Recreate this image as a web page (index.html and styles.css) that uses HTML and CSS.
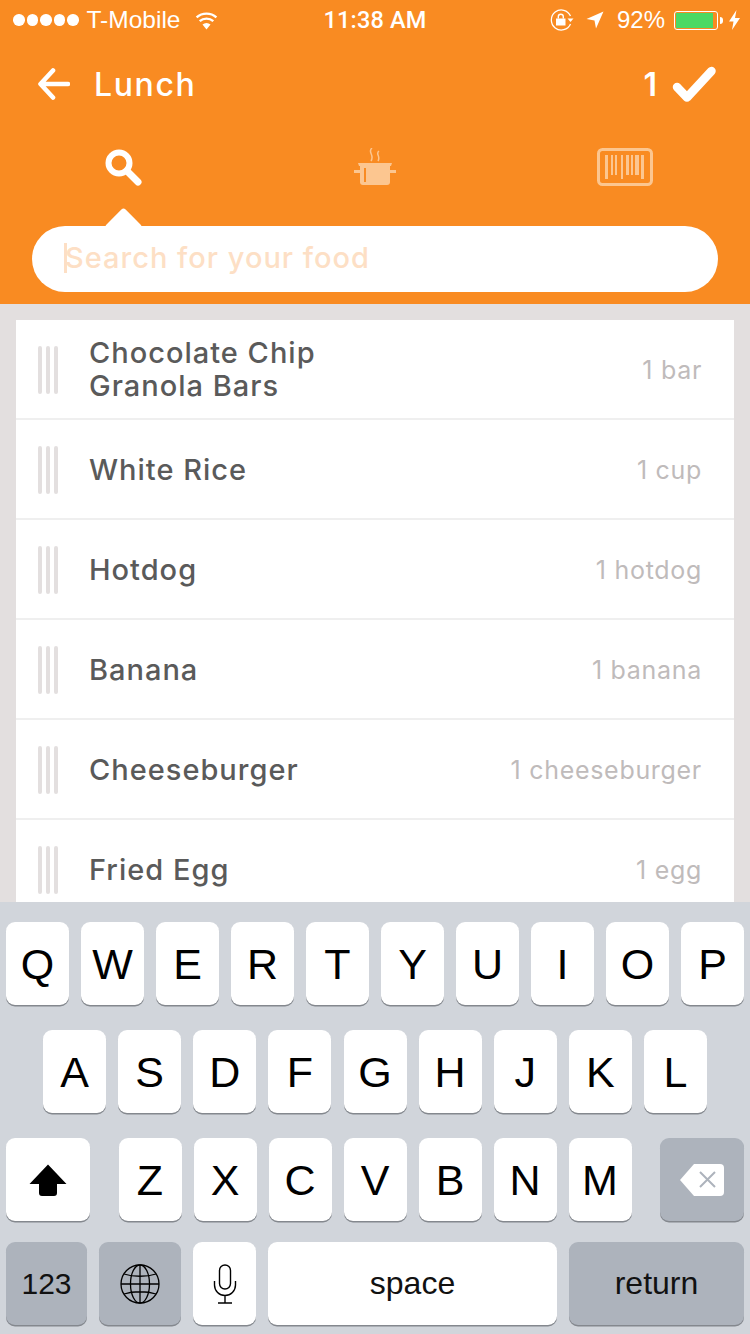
FILE: index.html
```html
<!DOCTYPE html>
<html lang="en">
<head>
    <meta charset="UTF-8">
    <title>Lunch</title>
    <link rel="stylesheet" href="styles.css">
</head>
<body>
<div class="screen">
    <header class="top">
        <div class="status">
            <div class="status-left">
                <span class="dots"><i></i><i></i><i></i><i></i><i></i></span>
                <span class="carrier">T-Mobile</span>
                <svg class="wifi" width="25" height="19" viewBox="0 0 25 19">
                    <path d="M12.5 18.5l-4-5a6 6 0 0 1 8 0z" fill="#fff"/>
                    <path d="M5.7 10.2a10.2 10.2 0 0 1 13.6 0M2.6 6.4a15 15 0 0 1 19.8 0" fill="none" stroke="#fff" stroke-width="2.4"/>
                </svg>
            </div>
            <div class="time">11:38 AM</div>
            <div class="status-right">
                <svg width="24" height="22" viewBox="0 0 24 22">
                    <path d="M20.500 15a10 10 0 1 1 0-8" fill="none" stroke="#fff" stroke-width="1.300"/>
                    <path d="M17.500 9.500h6l-3 3.500z" fill="#fff"/>
                    <path d="M6 9.500h9.500v7h-9.500z" fill="#fff"/>
                    <path d="M8.300 9.500v-1.800a2.500 2.500 0 0 1 5 0v1.800" fill="none" stroke="#fff" stroke-width="1.400"/>
                </svg>
                <svg class="arrow-loc" width="18" height="18" viewBox="0 0 18 18">
                    <path d="M17.500 0.500L0.500 8l8 1.500 1.500 8z" fill="#fff"/>
                </svg>
                <span class="batt-pct">92%</span>
                <span class="battery"><span class="battery-fill"></span></span>
                <span class="battery-tip"></span>
                <svg class="bolt" width="11" height="20" viewBox="0 0 11 20">
                    <path d="M7.500 0L0 11.500h4.500L3 20l8-12H6z" fill="#fff"/>
                </svg>
            </div>
        </div>

        <div class="nav">
            <svg width="32" height="32" viewBox="0 0 32 32">
                <path d="M15 2.500L2.500 16 15 29.500M3 16h27" fill="none" stroke="#fff" stroke-width="4.600" stroke-linecap="round" stroke-linejoin="round"/>
            </svg>
            <span class="nav-title">Lunch</span>
            <span class="nav-count">1</span>
            <svg width="44" height="37" viewBox="0 0 44 37">
                <path d="M5 21l10 10.500L39.500 5" fill="none" stroke="#fff" stroke-width="8.500" stroke-linecap="round" stroke-linejoin="round"/>
            </svg>
        </div>

        <div class="tabs">
            <div class="tab tab-search">
                <svg width="38" height="38" viewBox="0 0 38 38">
                    <circle cx="15" cy="15" r="10.500" fill="none" stroke="#fff" stroke-width="6"/>
                    <path d="M23 23l11 11" stroke="#fff" stroke-width="7" stroke-linecap="round"/>
                </svg>
            </div>
            <div class="tab">
                <svg width="42" height="38" viewBox="0 0 42 38">
                    <g fill="#fcc690">
                        <path d="M4 15h34l-1 3h-32z"/>
                        <path d="M6 17h30v17a3 3 0 0 1-3 3h-24a3 3 0 0 1-3-3z"/>
                        <path d="M0 22h6v3h-6zM36 22h6v3h-6z"/>
                    </g>
                    <path d="M11 20v14" stroke="#f98b22" stroke-width="2"/>
                    <path d="M18 0c-5 4 3 7-1 13M25 3c-4 3 2 5-1 10" fill="none" stroke="#fcc690" stroke-width="1.500"/>
                </svg>
            </div>
            <div class="tab">
                <svg width="56" height="38" viewBox="0 0 56 38">
                    <rect x="1.500" y="1.500" width="53" height="35" rx="4" fill="none" stroke="#fcc690" stroke-width="3"/>
                    <g fill="#fcc690">
                        <rect x="8" y="7" width="3" height="24"/>
                        <rect x="14" y="7" width="2" height="20"/>
                        <rect x="18" y="7" width="2" height="20"/>
                        <rect x="24" y="7" width="2" height="24"/>
                        <rect x="29" y="7" width="3" height="20"/>
                        <rect x="34" y="7" width="2" height="20"/>
                        <rect x="38" y="7" width="4" height="20"/>
                        <rect x="44" y="7" width="3" height="24"/>
                    </g>
                </svg>
            </div>
        </div>

        <div class="search">
            <span class="search-tip"></span>
            <span class="search-caret"></span>
            <span class="search-text">Search for your food</span>
        </div>
    </header>

    <main class="content">
        <ul class="food-list">
            <li class="food">
                <span class="grip"><i></i><i></i><i></i></span>
                <span class="food-name">Chocolate Chip<br>Granola Bars</span>
                <span class="food-qty">1 bar</span>
            </li>
            <li class="food">
                <span class="grip"><i></i><i></i><i></i></span>
                <span class="food-name">White Rice</span>
                <span class="food-qty">1 cup</span>
            </li>
            <li class="food">
                <span class="grip"><i></i><i></i><i></i></span>
                <span class="food-name">Hotdog</span>
                <span class="food-qty">1 hotdog</span>
            </li>
            <li class="food">
                <span class="grip"><i></i><i></i><i></i></span>
                <span class="food-name">Banana</span>
                <span class="food-qty">1 banana</span>
            </li>
            <li class="food">
                <span class="grip"><i></i><i></i><i></i></span>
                <span class="food-name">Cheeseburger</span>
                <span class="food-qty">1 cheeseburger</span>
            </li>
            <li class="food">
                <span class="grip"><i></i><i></i><i></i></span>
                <span class="food-name">Fried Egg</span>
                <span class="food-qty">1 egg</span>
            </li>
        </ul>
    </main>

    <div class="keyboard">
        <div class="kb-row">
            <div class="key">Q</div><div class="key">W</div><div class="key">E</div><div class="key">R</div><div class="key">T</div><div class="key">Y</div><div class="key">U</div><div class="key">I</div><div class="key">O</div><div class="key">P</div>
        </div>
        <div class="kb-row kb-row-2">
            <div class="key">A</div><div class="key">S</div><div class="key">D</div><div class="key">F</div><div class="key">G</div><div class="key">H</div><div class="key">J</div><div class="key">K</div><div class="key">L</div>
        </div>
        <div class="kb-row">
            <div class="key key-shift">
                <svg width="38" height="32" viewBox="0 0 38 32">
                    <path d="M19 0.500L37.500 20H28v9a3 3 0 0 1-3 3H13a3 3 0 0 1-3-3v-9H0.500z" fill="#000"/>
                </svg>
            </div>
            <div class="kb-group">
                <div class="key">Z</div><div class="key">X</div><div class="key">C</div><div class="key">V</div><div class="key">B</div><div class="key">N</div><div class="key">M</div>
            </div>
            <div class="key key-dark key-delete">
                <svg width="44" height="32" viewBox="0 0 44 32">
                    <path d="M14 0h26a4 4 0 0 1 4 4v24a4 4 0 0 1-4 4H14L0 16z" fill="#fff"/>
                    <path d="M20 8l15 15M35 8L20 23" stroke="#adb3bc" stroke-width="2"/>
                </svg>
            </div>
        </div>
        <div class="kb-row kb-row-4">
            <div class="key key-dark key-num">123</div>
            <div class="key key-dark key-globe">
                <svg width="40" height="40" viewBox="0 0 40 40">
                    <g fill="none" stroke="#000" stroke-width="1.300">
                        <circle cx="20" cy="20" r="19"/>
                        <ellipse cx="20" cy="20" rx="9.500" ry="19"/>
                        <path d="M20 1v38M1 20h38M4 10c9 3 23 3 32 0M4 30c9-3 23-3 32 0"/>
                    </g>
                </svg>
            </div>
            <div class="key">
                <svg width="24" height="40" viewBox="0 0 24 40">
                    <rect x="6.500" y="1" width="11" height="24" rx="5.500" fill="none" stroke="#000" stroke-width="1.400"/>
                    <path d="M1.500 17v4a10.500 10.500 0 0 0 21 0v-4M12 31.500V39M5 39h14" fill="none" stroke="#000" stroke-width="1.400"/>
                </svg>
            </div>
            <div class="key key-space">space</div>
            <div class="key key-dark key-return">return</div>
        </div>
    </div>
</div>
</body>
</html>
```

FILE: styles.css
```css
html, body {
    margin: 0;
    padding: 0;
}
body {
    font-family: Inter, 'Noto Sans', sans-serif;
    background: #e3dfdf;
}
.screen {
    width: 750px;
    height: 1334px;
    display: flex;
    flex-direction: column;
    overflow: hidden;
}

/* orange header */
.top {
    height: 304px;
    flex: none;
    background: #f98b22;
    color: #fff;
}
.status {
    height: 40px;
    display: grid;
    grid-template-columns: 1fr auto 1fr;
    align-items: center;
    font-family: 'Liberation Sans', Arial, sans-serif;
    font-size: 24px;
}
.status-left {
    display: flex;
    align-items: center;
    padding-left: 13px;
}
.dots {
    display: flex;
    gap: 2px;
}
.dots i {
    width: 11.500px;
    height: 11.500px;
    border-radius: 50%;
    background: #fff;
}
.carrier {
    margin-left: 8px;
    font-size: 24.500px;
}
.wifi {
    margin-left: 14px;
}
.time {
    font-family: Roboto, sans-serif;
    font-weight: 500;
    font-size: 23.500px;
    letter-spacing: 0.200px;
}
.status-right {
    display: flex;
    align-items: center;
    justify-content: flex-end;
    padding-right: 10px;
}
.arrow-loc {
    margin-left: 12px;
}
.batt-pct {
    margin-left: 13px;
}
.battery {
    margin-left: 9px;
    width: 44px;
    height: 19px;
    box-sizing: border-box;
    border: 1px solid #fff;
    border-radius: 3px;
    padding: 1px;
    background: #f98b22;
}
.battery-fill {
    display: block;
    height: 100%;
    width: 92%;
    background: #4cd964;
}
.battery-tip {
    width: 3px;
    height: 7px;
    margin-left: 2px;
    background: #fff;
    border-radius: 0 3px 3px 0;
}
.bolt {
    margin-left: 6px;
}

.nav {
    height: 88px;
    display: flex;
    align-items: center;
    padding: 0 34px 0 38px;
}
.nav-title {
    margin-left: 24px;
    font-size: 32px;
    font-weight: 500;
    letter-spacing: 1.600px;
}
.nav-count {
    margin-left: auto;
    margin-right: 15px;
    font-size: 32px;
    font-weight: 600;
}

.tabs {
    display: flex;
    height: 40px;
    margin-top: 19px;
    align-items: center;
}
.tab {
    width: 250px;
    box-sizing: border-box;
    display: flex;
    justify-content: center;
}
.tab-search {
    padding-right: 4px;
}

.search {
    position: relative;
    height: 66px;
    margin: 39px 32px 0;
    background: #fff;
    border-radius: 33px;
    display: flex;
    align-items: center;
    padding-left: 33px;
}
.search-tip {
    position: absolute;
    left: 77.500px;
    top: -13.500px;
    width: 27px;
    height: 27px;
    background: #fff;
    border-radius: 3px;
    transform: rotate(45deg);
}
.search-caret {
    position: absolute;
    left: 32px;
    top: 17px;
    width: 3px;
    height: 30px;
    background: #fddfc5;
}
.search-text {
    position: relative;
    top: -2px;
    font-size: 29px;
    font-weight: 500;
    letter-spacing: 1px;
    color: #fddfc5;
}

/* food list */
.content {
    flex: 1;
    min-height: 0;
    overflow: hidden;
    padding: 16px 16px 0;
}
.food-list {
    list-style: none;
    margin: 0;
    padding: 0;
    background: #fff;
}
.food {
    height: 100px;
    display: flex;
    align-items: center;
    padding: 0 32px 0 22px;
    box-shadow: inset 0 -2px 0 #efefef;
}
.grip {
    display: flex;
    gap: 4px;
    flex: none;
}
.grip i {
    width: 4px;
    height: 48px;
    border-radius: 2px;
    background: #e3dfdf;
}
.food-name {
    margin: -2px 0 0 31px;
    font-size: 29px;
    font-weight: 500;
    line-height: 33px;
    color: #5a5a5a;
    letter-spacing: 1px;
}
.food-qty {
    margin-left: auto;
    font-size: 25px;
    color: #bfbbbb;
    letter-spacing: 0.700px;
}

/* keyboard */
.keyboard {
    flex: none;
    height: 432px;
    box-sizing: border-box;
    background: #d1d5db;
    padding: 20px 6px 0;
    font-family: 'Liberation Sans', Arial, sans-serif;
}
.kb-row {
    display: flex;
    justify-content: space-between;
    height: 84px;
    margin-bottom: 24px;
}
.kb-row-2 {
    padding: 0 37px;
}
.kb-row-4 {
    margin-top: -4px;
    margin-bottom: 0;
}
.kb-group {
    display: flex;
    gap: 12px;
}
.key {
    width: 63px;
    height: 82.500px;
    flex: none;
    box-sizing: border-box;
    display: flex;
    align-items: center;
    justify-content: center;
    padding-top: 2px;
    background: #fff;
    border-radius: 9px;
    box-shadow: 0 1.500px 0 #84888e;
    font-size: 43px;
    color: #000;
}
.key-dark {
    background: #adb3bc;
}
.key-shift, .key-delete {
    width: 84px;
}
.key-num {
    width: 81px;
    padding-top: 1px;
    font-size: 30px;
    color: #111;
}
.key-globe {
    width: 82px;
}
.key-space {
    width: 289px;
    padding-top: 0;
    font-size: 32px;
    color: #111;
}
.key-return {
    width: 175px;
    padding-top: 0;
    font-size: 32px;
    color: #111;
}
```
